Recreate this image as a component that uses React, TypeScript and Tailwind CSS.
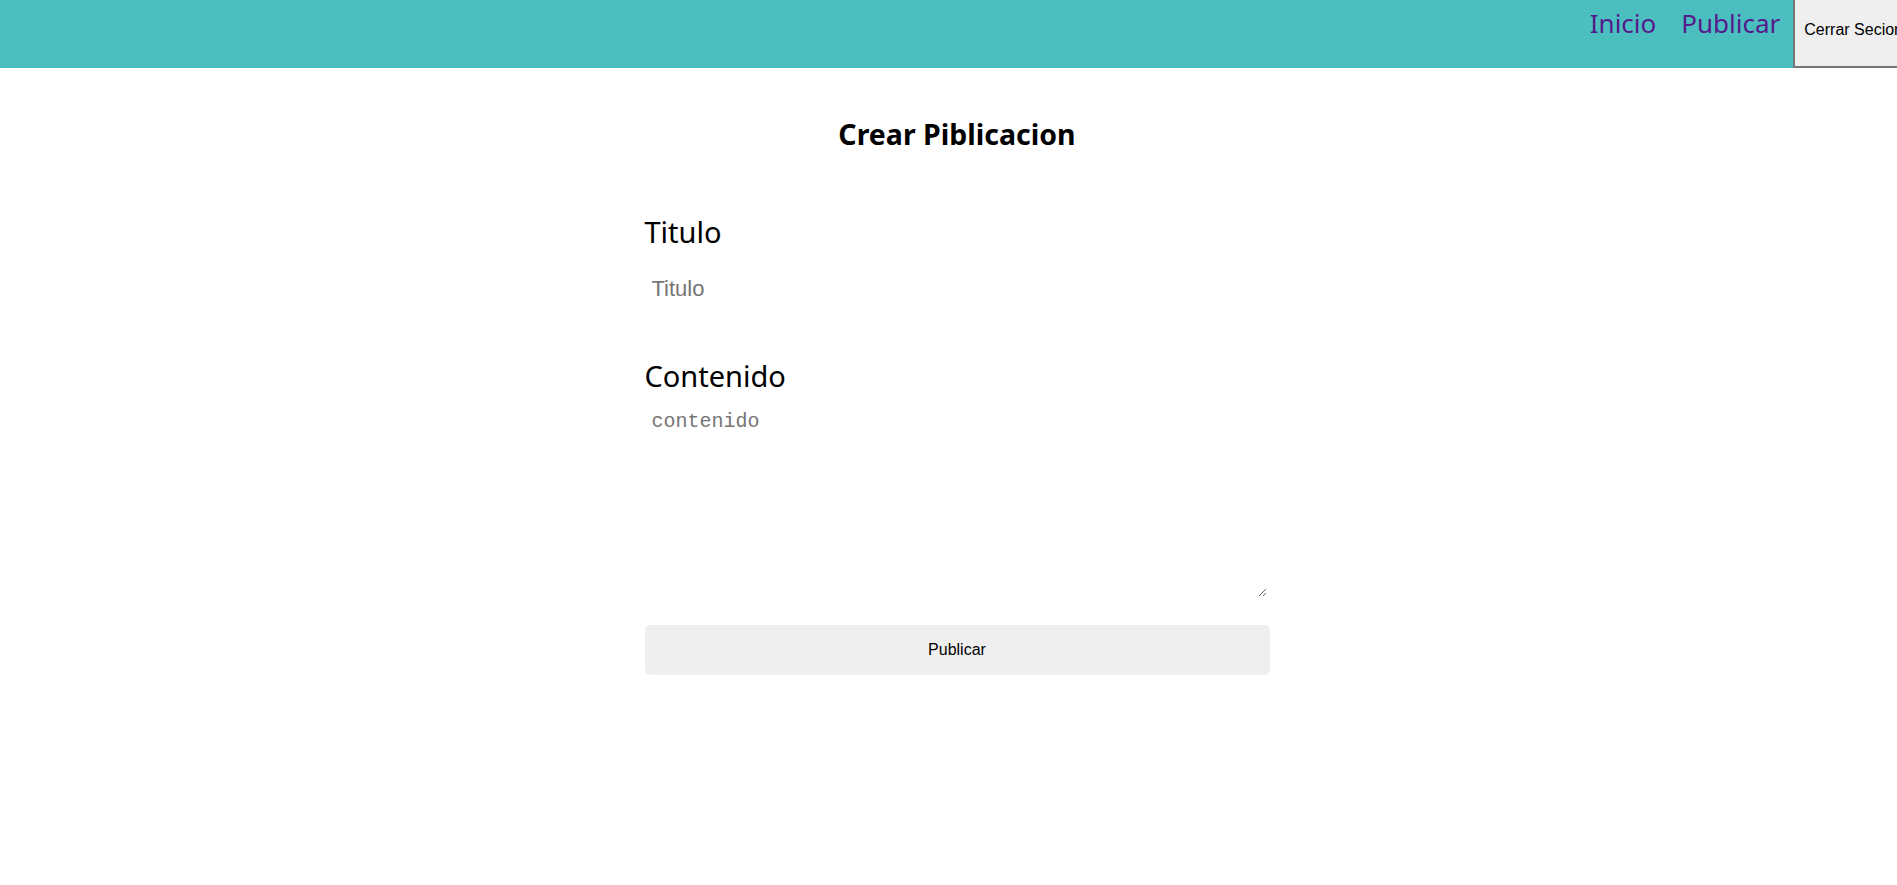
import { useState } from "react";

export default function App() {
  const [titulo, setTitulo] = useState("");
  const [contenido, setContenido] = useState("");
  const navLinks = ["Inicio", "Publicar"];
  return (
    <div className="min-h-screen bg-white font-['Noto_Sans',sans-serif]">
      <header className="flex h-[68px] items-start overflow-hidden bg-[#4bbfc0]">
        <nav className="ml-auto flex items-start">
          {navLinks.map((link, id) => {
            return (
              <a
                key={link}
                href="#"
                className={`pt-[5px] text-[26px] leading-[36px] text-[#551a8b] ${
                  id === 0 ? "mr-[25px]" : "mr-[13px]"
                }`}
              >
                {link}
              </a>
            );
          })}
          <button className="-mr-[17px] h-[68px] shrink-0 border-2 border-t-0 border-[#767676] bg-[#efefef] px-[9px] pb-[7px] font-['Liberation_Sans',Arial,sans-serif] text-[16px] text-black">
            Cerrar Secion
          </button>
        </nav>
      </header>
      <main className="flex justify-center pl-[17px]">
        <form
          className="flex w-[625px] flex-col"
          onSubmit={(e) => e.preventDefault()}
        >
          <h1 className="mt-[47px] text-center text-[28.5px] leading-[38px] font-bold text-black">
            Crear Piblicacion
          </h1>
          <label className="mt-[59px] text-[29px] leading-[40px] text-black">
            Titulo
          </label>
          <input
            type="text"
            placeholder="Titulo"
            value={titulo}
            onChange={(e) => setTitulo(e.target.value)}
            className="mt-[21px] border-0 px-[7px] py-[3px] font-['Liberation_Sans',Arial,sans-serif] text-[22px] leading-[25px] text-black outline-none placeholder:text-[#757575]"
          />
          <label className="mt-[52px] text-[29px] leading-[40px] text-black">
            Contenido
          </label>
          <textarea
            placeholder="contenido"
            value={contenido}
            onChange={(e) => setContenido(e.target.value)}
            className="mt-[7px] mr-[3px] h-[194px] border-0 px-[7px] py-[7px] font-['Liberation_Mono',monospace] text-[20px] leading-[23px] text-black outline-none placeholder:text-[#757575]"
          />
          <button
            type="submit"
            className="mt-[28px] h-[50px] rounded-[5px] bg-[#efefef] font-['Liberation_Sans',Arial,sans-serif] text-[16px] text-black"
          >
            Publicar
          </button>
        </form>
      </main>
    </div>
  );
}
